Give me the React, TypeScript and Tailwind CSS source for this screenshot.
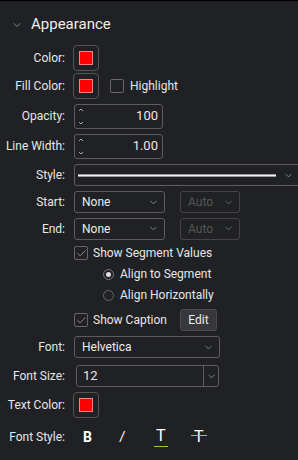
import { ChevronDown, Check } from "lucide-react";

const Label = ({ text }: { text: string }) => (
  <div className="w-[66px] shrink-0 text-right pr-[1px]">{text}</div>
);

const Swatch = () => (
  <div className="w-[26px] h-[26px] rounded-[4px] border border-[#555] flex items-center justify-center -ml-[1px]">
    <div className="w-[14px] h-[14px] bg-[#ff0000] border border-[#ff8080]" />
  </div>
);

const CheckBox = ({ checked }: { checked?: boolean }) => (
  <div className="w-[14px] h-[14px] rounded-[2px] border border-[#666] flex items-center justify-center">
    {checked && <Check size={11} strokeWidth={1.5} className="text-[#bdbdbd]" />}
  </div>
);

const Select = ({ value, w, disabled }: { value: string; w: string; disabled?: boolean }) => (
  <div
    className={`${w} h-[22px] rounded-[3px] border flex items-center justify-between pl-[7px] pr-[5px] ${
      disabled ? "border-[#444] text-[#555]" : "border-[#5c5c5c] text-[#ececec]"
    }`}
  >
    <span>{value}</span>
    <ChevronDown size={11} strokeWidth={1.5} className={disabled ? "text-[#888]" : "text-[#aaa]"} />
  </div>
);

const Spinner = ({ value }: { value: string }) => (
  <div className="w-[89px] h-[25px] rounded-[3px] border border-[#5c5c5c] flex items-center justify-between pl-[3px] pr-[4px]">
    <div className="flex flex-col justify-between h-[17px] text-[#aaa]">
      <svg width="6" height="4" viewBox="0 0 6 4"><path d="M1 3 L3 1 L5 3" fill="none" stroke="currentColor" strokeWidth="1" /></svg>
      <svg width="6" height="4" viewBox="0 0 6 4"><path d="M1 1 L3 3 L5 1" fill="none" stroke="currentColor" strokeWidth="1" /></svg>
    </div>
    <span className="text-[13px]">{value}</span>
  </div>
);

export default function App() {
  return (
    <div
      className="w-[298px] h-[460px] overflow-hidden bg-[#202124] border-t border-black text-[#e6e6e6] text-[12px]"
      style={{ fontFamily: "Roboto, 'Liberation Sans', sans-serif" }}
    >
      <div className="h-[43px] flex items-center pt-[4px] pl-[11px]">
        <ChevronDown size={12} strokeWidth={1.25} className="text-[#bbb]" />
        <span className="ml-[8px] text-[15px] text-[#ececec]">Appearance</span>
      </div>

      <div className="h-[27px] flex items-center gap-[8px]">
        <Label text="Color:" />
        <Swatch />
      </div>

      <div className="h-[30px] flex items-center gap-[8px]">
        <Label text="Fill Color:" />
        <Swatch />
        <div className="flex items-center gap-[6px] ml-[3px]">
          <CheckBox />
          <span>Highlight</span>
        </div>
      </div>

      <div className="h-[30px] flex items-center gap-[8px]">
        <Label text="Opacity:" />
        <Spinner value="100" />
      </div>

      <div className="h-[30px] flex items-center gap-[8px]">
        <Label text="Line Width:" />
        <Spinner value="1.00" />
      </div>

      <div className="h-[28px] flex items-center gap-[8px]">
        <Label text="Style:" />
        <div className="w-[232px] shrink-0 h-[22px] rounded-[3px] border border-[#5c5c5c] flex items-center pl-[3px] pr-[11px] gap-[7px]">
          <div className="flex-1 h-[3px] bg-[#f2f2f2] border-y border-[#999]" />
          <ChevronDown size={11} strokeWidth={1.5} className="text-[#aaa]" />
        </div>
      </div>

      <div className="h-[26px] flex items-center gap-[8px]">
        <Label text="Start:" />
        <Select value="None" w="w-[91px]" />
        <div className="ml-[7px]">
          <Select value="Auto" w="w-[60px]" disabled />
        </div>
      </div>

      <div className="h-[27px] flex items-center gap-[8px]">
        <Label text="End:" />
        <Select value="None" w="w-[91px]" />
        <div className="ml-[7px]">
          <Select value="Auto" w="w-[60px]" disabled />
        </div>
      </div>

      <div className="h-[22px] flex items-center gap-[5px] pl-[74px]">
        <CheckBox checked />
        <span>Show Segment Values</span>
      </div>

      <div className="h-[20px] flex items-center gap-[6px] pl-[103px]">
        <div className="w-[11px] h-[11px] rounded-full border border-[#777] flex items-center justify-center">
          <div className="w-[5px] h-[5px] rounded-full bg-[#e0e0e0]" />
        </div>
        <span>Align to Segment</span>
      </div>

      <div className="h-[22px] flex items-center gap-[6px] pl-[103px]">
        <div className="w-[11px] h-[11px] rounded-full border border-[#666]" />
        <span>Align Horizontally</span>
      </div>

      <div className="h-[28px] flex items-center pl-[74px]">
        <CheckBox checked />
        <span className="ml-[5px] w-[87px]">Show Caption</span>
        <div className="w-[37px] h-[22px] rounded-[3px] bg-[#36383b] border border-[#4a4a4a] flex items-center justify-center text-[#ececec]">
          Edit
        </div>
      </div>

      <div className="h-[26px] flex items-center gap-[8px]">
        <Label text="Font:" />
        <Select value="Helvetica" w="w-[146px]" />
      </div>

      <div className="h-[32px] flex items-center gap-[10px]">
        <Label text="Font Size:" />
        <div className="w-[143px] h-[22px] rounded-[3px] border border-[#5c5c5c] flex items-center">
          <span className="flex-1 pl-[6px] text-[13px]">12</span>
          <div className="w-[15px] h-full border-l border-[#5c5c5c] flex items-center justify-center">
            <ChevronDown size={11} strokeWidth={1.5} className="text-[#aaa]" />
          </div>
        </div>
      </div>

      <div className="h-[26px] flex items-center gap-[8px]">
        <Label text="Text Color:" />
        <Swatch />
      </div>

      <div className="h-[38px] flex items-center">
        <Label text="Font Style:" />
        <div className="flex items-center ml-[17px]">
          <span className="w-[37px] text-[14px] font-bold text-white">B</span>
          <span className="w-[36px] text-[14px] italic text-white" style={{ fontFamily: "'Liberation Sans', sans-serif" }}>/</span>
          <span className="w-[38px] relative flex flex-col items-start">
            <span className="text-[16px] leading-[16px] text-white">T</span>
            <span className="block w-[14px] h-[1px] bg-[#a5c43c] -ml-[2px] mt-[2px]" />
          </span>
          <span className="relative text-[16px] leading-[16px] text-white">
            T
            <span className="absolute left-[-3px] top-[6px] w-[16px] h-[1px] bg-[#a5c43c]" />
          </span>
        </div>
      </div>
    </div>
  );
}
